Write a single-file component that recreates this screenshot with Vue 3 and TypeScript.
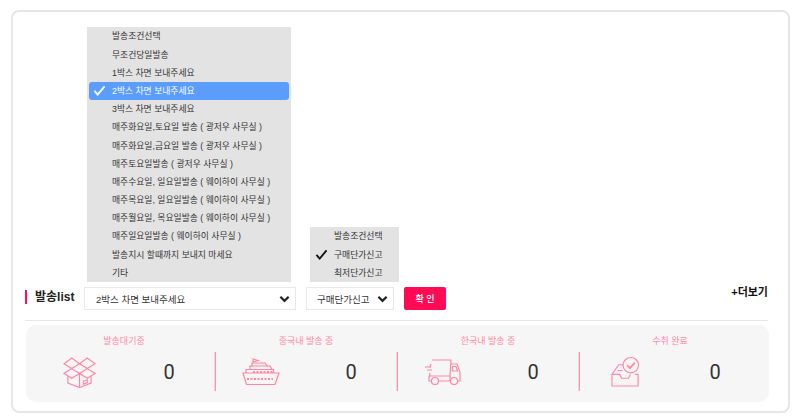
<template>
  <div class="card">
    <div class="filter-row">
      <h3 class="title">발송list</h3>

      <div class="select-wrap">
        <button class="select ship-select" type="button">
          <span>{{ shipOptions[shipIndex] }}</span>
          <svg class="chevron" viewBox="0 0 12 8"><path d="M1.5 1.5 6 6l4.5-4.5" /></svg>
        </button>
        <ul class="menu ship-menu">
          <li
            v-for="(opt, i) in shipOptions"
            :key="opt"
            :class="{ active: i === shipIndex }"
          >
            <svg v-if="i === shipIndex" class="tick" viewBox="0 0 14 12"><path d="M1.5 6.5 5 10.5 12.5 1.5" /></svg>
            {{ opt }}
          </li>
        </ul>
      </div>

      <div class="select-wrap">
        <button class="select price-select" type="button">
          <span>{{ priceOptions[priceIndex] }}</span>
          <svg class="chevron" viewBox="0 0 12 8"><path d="M1.5 1.5 6 6l4.5-4.5" /></svg>
        </button>
        <ul class="menu price-menu">
          <li v-for="(opt, i) in priceOptions" :key="opt">
            <svg v-if="i === priceIndex" class="tick" viewBox="0 0 14 12"><path d="M1.5 6.5 5 10.5 12.5 1.5" /></svg>
            {{ opt }}
          </li>
        </ul>
      </div>

      <button class="confirm" type="button">확 인</button>
      <a class="more">+더보기</a>
    </div>

    <div class="status-panel">
      <div v-for="item in statusList" :key="item.label" class="status-col">
        <p class="status-label">{{ item.label }}</p>
        <div class="status-body">
          <div class="icon-slot">
            <!-- 박스 -->
            <svg v-if="item.icon === 'box'" class="icon box" viewBox="0 0 34 34">
              <path d="M17 9 9 3 1 9l8 5zM17 9l8-6 8 6-8 5z" />
              <path d="M9 14 1 19l8 5 8-5 8 5 8-5-8-5-8 5-8-5z" />
              <path d="M5 22v7l12 4.500 12-4.500v-7M17 19v14.500" />
              <path d="M21 27l4-1.500v3l-4 1.500z" />
            </svg>
            <!-- 배 -->
            <svg v-else-if="item.icon === 'ship'" class="icon ship" viewBox="0 0 38 28">
              <path d="M1 15h36l-4 11.500H4.500z" />
              <path d="M4 15v-3.500h4V8h2V5h13l2 3h3l2 3.500h1.500V15" />
              <path d="M11 5V1l5 1.500L11 4" />
              <path d="M5 11.500h26M9 8h17" />
              <path class="dots" d="M5 21h26M11 14h20" />
            </svg>
            <!-- 트럭 -->
            <svg v-else-if="item.icon === 'truck'" class="icon truck" viewBox="0 0 38 26">
              <path d="M8 1h19l-1 16H5.500l.5-3" />
              <path d="M27 5h6l3 8v9h-3M26 17v5H15M7 22H5v-5" />
              <path d="M28.500 7.500h3.500l1.500 4.500h-5zM1 8h6M3 11h5M7 5 6 8" />
              <circle cx="11" cy="22" r="3.500" />
              <circle cx="30" cy="22" r="3.500" />
            </svg>
            <!-- 완료 -->
            <svg v-else class="icon tray" viewBox="0 0 30 32">
              <path d="M14 9H8L1 19v12h27V19h-3" />
              <path d="M1 19h8l2 4h7l2-4" />
              <path d="M7 15h5" />
              <circle cx="20.500" cy="9.500" r="8" fill="#f6f6f6" />
              <path class="check" d="M16.500 9.500l3 3 5-5.500" />
            </svg>
          </div>
          <span class="count">{{ item.count }}</span>
        </div>
      </div>
    </div>
  </div>
</template>

<script setup lang="ts">
import { ref } from 'vue'

const shipOptions = [
  '발송조건선택',
  '무조건당일발송',
  '1박스 차면 보내주세요',
  '2박스 차면 보내주세요',
  '3박스 차면 보내주세요',
  '매주화요일,토요일 발송 ( 광저우 사무실 )',
  '매주화요일,금요일 발송 ( 광저우 사무실 )',
  '매주토요일발송 ( 광저우 사무실 )',
  '매주수요일, 일요일발송 ( 웨이하이 사무실 )',
  '매주목요일, 일요일발송 ( 웨이하이 사무실 )',
  '매주월요일, 목요일발송 ( 웨이하이 사무실 )',
  '매주일요일발송 ( 웨이하이 사무실 )',
  '발송지시 할때까지 보내지 마세요',
  '기타',
]
const priceOptions = ['발송조건선택', '구매단가신고', '최저단가신고']

const shipIndex = ref(3)
const priceIndex = ref(1)

const statusList = [
  { label: '발송대기중', icon: 'box', count: 0 },
  { label: '중국내 발송 중', icon: 'ship', count: 0 },
  { label: '한국내 발송 중', icon: 'truck', count: 0 },
  { label: '수취 완료', icon: 'tray', count: 0 },
]
</script>

<style scoped>
.card {
  box-sizing: border-box;
  width: 779px;
  height: 403px;
  margin: 10px 0 0 11px;
  padding: 275px 20px 9px 12px;
  border: 2px solid #e6e6e6;
  border-radius: 8px;
  background: #fff;
  font-family: "Liberation Sans", "Noto Sans CJK KR", sans-serif;
  color: #333;
}

.filter-row {
  display: flex;
  align-items: flex-start;
  height: 33px;
  margin-bottom: 4px;
  border-bottom: 1px solid #e8e8e8;
}

.title {
  flex: none;
  width: 40px;
  height: 14px;
  margin: 3px 9px 0 0;
  padding-left: 8px;
  border-left: 2px solid #ff0f58;
  font-size: 12px;
  line-height: 14px;
  font-weight: 700;
  white-space: nowrap;
  color: #222;
}

.select-wrap {
  position: relative;
  margin-right: 10px;
}

.select {
  display: flex;
  align-items: center;
  justify-content: space-between;
  box-sizing: border-box;
  height: 23px;
  padding: 0 5px 0 11px;
  border: 1px solid #e8e8e8;
  background: #fff;
  font-family: inherit;
  font-size: 9.5px;
  color: #333;
}

.ship-select {
  width: 212px;
}

.price-select {
  width: 88px;
  padding-left: 10px;
}

.chevron {
  width: 11px;
  height: 8px;
  fill: none;
  stroke: #222;
  stroke-width: 2.4;
}

.menu {
  position: absolute;
  bottom: 28px;
  margin: 0;
  padding: 0;
  list-style: none;
  background: #e3e3e3;
  font-size: 8.8px;
  color: #333;
}

.menu li {
  position: relative;
  height: 18.2px;
  line-height: 18.2px;
  white-space: nowrap;
}

.ship-menu {
  left: 3px;
  width: 204px;
}

.ship-menu li {
  padding-left: 25px;
}

.ship-menu li.active {
  margin: 0 2px;
  padding-left: 23px;
  border-radius: 3px;
  background: #5a9dfc;
  color: #fff;
}

.price-menu {
  left: 4px;
  width: 89px;
}

.price-menu li {
  padding-left: 24px;
}

.tick {
  position: absolute;
  left: 5px;
  top: 3px;
  width: 13px;
  height: 11px;
  fill: none;
  stroke: #111;
  stroke-width: 2;
}

.active .tick {
  left: 4px;
  stroke: #fff;
}

.confirm {
  width: 42px;
  height: 23px;
  padding: 0;
  border: none;
  border-radius: 2px;
  background: #ff0a55;
  color: #fff;
  font-family: inherit;
  font-size: 9px;
  font-weight: 500;
}

.more {
  margin-left: auto;
  margin-top: -2px;
  font-size: 11px;
  line-height: 14px;
  font-weight: 700;
  color: #111;
}

.status-panel {
  display: grid;
  grid-template-columns: repeat(4, 182px);
  box-sizing: border-box;
  width: 743px;
  height: 77px;
  margin-left: 1px;
  padding-left: 7px;
  border-radius: 10px;
  background: #f6f6f6;
}

.status-label {
  margin: 10px 0 0;
  font-size: 9px;
  line-height: 12px;
  text-align: center;
  color: #ff8aa8;
}

.status-body {
  display: grid;
  grid-template-columns: 92px 88px;
  align-items: center;
  height: 39px;
  margin-top: 5px;
}

.status-col + .status-col .status-body {
  box-shadow: -1px 0 0 #ffd3de, inset 1px 0 0 #ff8fab;
}

.icon-slot {
  display: flex;
  justify-content: center;
}

.icon {
  display: block;
  fill: none;
  stroke: #ff86a5;
  stroke-width: 1.2;
}

.box {
  width: 33px;
  height: 33px;
}

.ship {
  width: 38px;
  height: 28px;
}

.dots {
  stroke-width: 2;
  stroke-dasharray: 2 1.5;
}

.truck {
  width: 38px;
  height: 26px;
}

.tray {
  width: 29px;
  height: 31px;
}

.check {
  stroke-width: 1.8;
}

.count {
  font-family: Roboto, "Liberation Sans", sans-serif;
  font-size: 20px;
  line-height: 24px;
  text-align: center;
  color: #333;
}
</style>
